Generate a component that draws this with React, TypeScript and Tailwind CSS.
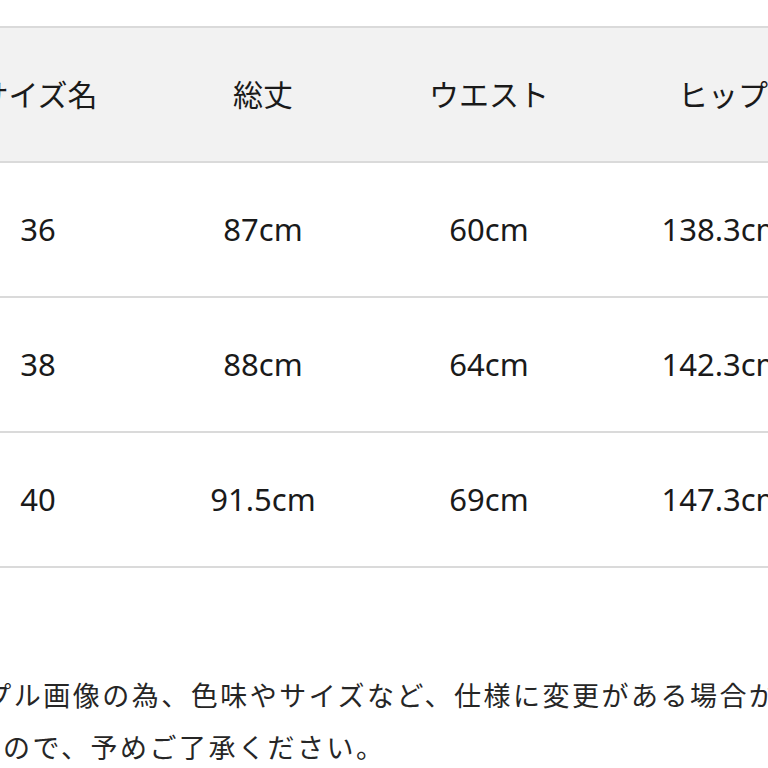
import React from "react";

const columns = ["サイズ名", "総丈", "ウエスト", "ヒップ"];

const rows = [
  ["36", "87cm", "60cm", "138.3cm"],
  ["38", "88cm", "64cm", "142.3cm"],
  ["40", "91.5cm", "69cm", "147.3cm"],
];

export default function App() {
  return (
    <div className="w-[768px] h-[768px] overflow-hidden bg-white text-[#1a1a1a]">
      {/* Size table */}
      <div className="pt-[26px] ml-[-75px] w-[918px]">
        <div className="border-t-2 border-[#dadada]">
          <div className="grid grid-cols-[226px_224px_228px_240px] h-[135px] bg-[#f2f2f2] border-b-2 border-[#dadada] items-center pb-[3px]">
            {columns.map((c) => (
              <div
                key={c}
                className="text-center text-[30px] leading-none font-['Noto_Sans_CJK_JP',sans-serif]"
              >
                {c}
              </div>
            ))}
          </div>
          {rows.map((r) => (
            <div
              key={r[0]}
              className="grid grid-cols-[226px_224px_228px_240px] h-[135px] border-b-2 border-[#dadada] items-center"
            >
              {r.map((v, i) => (
                <div
                  key={i}
                  className="text-center text-[31px] leading-none font-['Noto_Sans',sans-serif] whitespace-nowrap"
                >
                  {v}
                </div>
              ))}
            </div>
          ))}
        </div>
      </div>

      {/* Notice */}
      <div className="mt-[101px] text-[#262626] text-[27px] tracking-[2.5px] leading-[52px] font-['Noto_Sans_CJK_JP',sans-serif] whitespace-nowrap">
        <p className="ml-[-74px]">
          サンプル画像の為、色味やサイズなど、仕様に変更がある場合がございますので
        </p>
        <p className="ml-[-56px]">ますので、予めご了承ください。</p>
      </div>
    </div>
  );
}
